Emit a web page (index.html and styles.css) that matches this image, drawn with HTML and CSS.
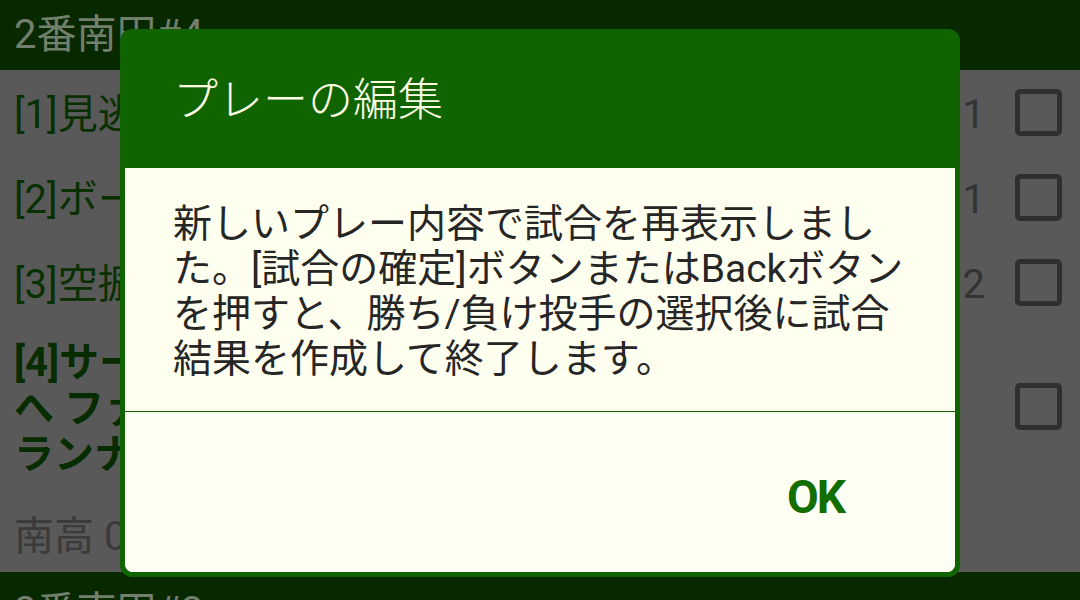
FILE: index.html
```html
<!DOCTYPE html>
<html lang="ja">
<head>
<meta charset="utf-8">
<title>プレーの編集</title>
<link rel="stylesheet" href="styles.css">
</head>
<body>
<div class="screen">
  <div class="section-bar">2番南田#4</div>
  <div class="list">
    <div class="row">
      <div class="row-text">[1]見逃し ストライク</div>
      <div class="row-num">1</div>
      <div class="checkbox"></div>
    </div>
    <div class="row">
      <div class="row-text">[2]ボール</div>
      <div class="row-num">1</div>
      <div class="checkbox"></div>
    </div>
    <div class="row">
      <div class="row-text">[3]空振り ストライク</div>
      <div class="row-num">2</div>
      <div class="checkbox"></div>
    </div>
    <div class="row row-multi">
      <div class="row-text bold">[4]サードゴロ 一塁送球 打者走者<br>へ ファーストランナー二塁封殺<br>ランナー進塁</div>
      <div class="checkbox"></div>
    </div>
    <div class="summary">南高 0 - 0 北高</div>
  </div>
  <div class="section-bar bottom">2番南田#3</div>

  <div class="dialog">
    <div class="dialog-title">プレーの編集</div>
    <div class="dialog-content">
      <div class="dialog-message">新しいプレー内容で試合を再表示しました。[試合の確定]ボタンまたはBackボタンを押すと、勝ち/負け投手の選択後に試合結果を作成して終了します。</div>
      <div class="dialog-divider"></div>
      <div class="dialog-buttons">
        <span class="ok-button">OK</span>
      </div>
    </div>
  </div>
</div>
</body>
</html>
```

FILE: styles.css
```css
html, body {
  margin: 0;
  padding: 0;
}

body {
  width: 1080px;
  height: 600px;
  overflow: hidden;
  font-family: Roboto, "Noto Sans CJK JP", sans-serif;
  background: #595959;
}

.screen {
  position: relative;
  width: 1080px;
  height: 600px;
  overflow: hidden;
  display: flex;
  flex-direction: column;
}

.section-bar {
  height: 70px;
  box-sizing: border-box;
  padding: 12px 0 0 14px;
  background: #082900;
  color: #717f6c;
  font-size: 40px;
  line-height: 46px;
  white-space: nowrap;
  flex: none;
}

.section-bar.bottom {
  padding-top: 17px;
}

.list {
  height: 502px;
  background: #595959;
  display: flex;
  flex-direction: column;
  flex: none;
}

.row {
  height: 85px;
  box-sizing: border-box;
  padding: 4px 18px 0 14px;
  display: flex;
  align-items: center;
  flex: none;
}

.row-multi {
  height: 171px;
  padding-top: 15px;
  padding-bottom: 18px;
  align-items: flex-start;
}

.row-multi .checkbox {
  margin-top: 43px;
  margin-left: 70px;
}

.row-text {
  flex: 1;
  min-width: 0;
  font-size: 40px;
  line-height: 46px;
  color: #083000;
  white-space: nowrap;
  overflow: hidden;
}

.row-text.bold {
  font-weight: bold;
  color: #072c00;
}

.row-num {
  width: 40px;
  text-align: right;
  font-size: 40px;
  line-height: 46px;
  color: #333333;
}

.checkbox {
  width: 47px;
  height: 47px;
  box-sizing: border-box;
  border: 5px solid #2f2f2f;
  border-radius: 5px;
  margin-left: 30px;
  margin-top: -5px;
  flex: none;
}

.summary {
  flex: 1;
  padding: 18px 0 0 14px;
  font-size: 40px;
  line-height: 46px;
  color: #3a3a3a;
  white-space: nowrap;
}

/* Dialog overlay */
.dialog {
  position: absolute;
  left: 120px;
  top: 29px;
  width: 840px;
  height: 548px;
  box-sizing: border-box;
  padding: 0 5px 5px 5px;
  background: #106400;
  border-radius: 12px;
  display: flex;
  flex-direction: column;
}

.dialog-title {
  height: 139px;
  box-sizing: border-box;
  padding: 47px 0 0 48px;
  font-size: 45px;
  font-weight: 300;
  line-height: 50px;
  color: #fdfde4;
  flex: none;
}

.dialog-content {
  flex: 1;
  background: #fffff0;
  border-radius: 0 0 8px 8px;
  display: flex;
  flex-direction: column;
}

.dialog-message {
  padding: 34px 46px 29px 48px;
  font-size: 39px;
  line-height: 45px;
  color: #262626;
}

.dialog-divider {
  height: 1px;
  background: #106400;
  flex: none;
}

.dialog-buttons {
  flex: 1;
  padding: 57px 111px 0 0;
  text-align: right;
  background: #fffff4;
  border-radius: 0 0 8px 8px;
}

.ok-button {
  font-size: 46px;
  line-height: 56px;
  font-weight: bold;
  letter-spacing: -2px;
  color: #126e00;
}
```
